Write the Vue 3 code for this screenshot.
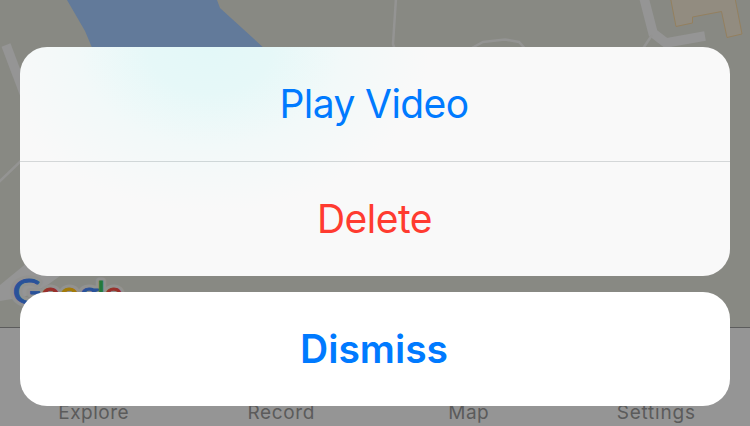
<script setup>
const tabs = ['Explore', 'Record', 'Map', 'Settings']
const actions = [
  { label: 'Play Video', kind: 'play' },
  { label: 'Delete', kind: 'delete' },
]
const letters = [
  { c: 'G', x: 12.5, y: 303.5, w: 29, size: 35.5, color: '#29529a' },
  { c: 'o', x: 41, y: 305, w: 19, size: 33, color: '#99302a' },
  { c: 'o', x: 60, y: 305, w: 19, size: 33, color: '#a47b08' },
  { c: 'g', x: 80, y: 305, w: 19, size: 33, color: '#29529a' },
  { c: 'l', x: 97, y: 304.5, w: 8, size: 33, color: '#237a3b' },
  { c: 'e', x: 104.5, y: 305, w: 18, size: 33, color: '#99302a' },
]
</script>

<template>
  <div class="screen">
    <svg class="map" width="750" height="327" viewBox="0 0 750 327">
      <path class="water" d="M67 0 L85 31 L93 50 L266 50 L220 8 L217 0 Z" />
      <path class="road thick" d="M6 45 L26 98" />
      <path class="road path" d="M-2 183 L24 158" />
      <path class="area" d="M0 285 L28 262 L60 276 L46 286 L24 297 L0 301 Z" />
      <path class="road path" d="M396 -2 L393 44 L395 50" />
      <path class="road path" d="M470 49 L483 42 L505 39.5 L519 42 L530 54" />
      <path class="road thick" d="M644 -2 L653 33 L666 43 L705 36" />
      <path class="road path" d="M652 35 L640 53" />
      <path class="building" d="M670.5 -2 L676 26.5 L692.5 23 V17 L721.5 11.500 L727 37.500 L742 34 L735 -2 Z" />
      <g class="logo">
        <text v-for="l in letters" :key="'h' + l.x" class="halo" :x="l.x" :y="l.y" :font-size="l.size" :textLength="l.w" lengthAdjust="spacingAndGlyphs">{{ l.c }}</text>
        <text v-for="l in letters" :key="l.x" :x="l.x" :y="l.y" :font-size="l.size" :fill="l.color" :stroke="l.color" stroke-width="0.900" :textLength="l.w" lengthAdjust="spacingAndGlyphs">{{ l.c }}</text>
      </g>
    </svg>
    <nav class="tabs">
      <span v-for="t in tabs" :key="t" class="tab" :class="t.toLowerCase()">{{ t }}</span>
    </nav>
    <div class="sheet">
      <div class="card actions">
        <button v-for="a in actions" :key="a.kind" class="action" :class="a.kind"><span>{{ a.label }}</span></button>
      </div>
      <div class="card">
        <button class="action dismiss"><span>Dismiss</span></button>
      </div>
    </div>
  </div>
</template>

<style>
body { margin: 0; overflow: hidden; }
</style>

<style scoped>
.screen {
  position: relative;
  width: 750px;
  height: 426px;
  overflow: hidden;
  background: #888983;
  font-family: Inter, "Liberation Sans", sans-serif;
}
.map { display: block; }
.water { fill: #627a9a; }
.road { fill: none; stroke: #959595; }
.thick { stroke-width: 9.5; }
.path { stroke: #949493; stroke-width: 2.5; }
.area { fill: #959595; }
.building { fill: #928c80; stroke: #94805f; stroke-width: 1; }
.logo { font-family: Lato, sans-serif; }
.halo { fill: #929290; stroke: #929290; stroke-width: 7; stroke-linejoin: round; }
.tabs {
  box-sizing: border-box;
  height: 99px;
  display: grid;
  grid-template-columns: repeat(4, 1fr);
  align-items: end;
  padding-bottom: 1px;
  background: #959595;
  border-top: 1px solid #5c5c5c;
}
.tab {
  font-size: 19px;
  line-height: 24px;
  letter-spacing: 0.5px;
  text-align: center;
  color: #5b5b5b;
}
.record { letter-spacing: 0.65px; }
.settings { letter-spacing: 0.8px; }
.sheet {
  position: absolute;
  inset: 47px 20px 20px;
  display: flex;
  flex-direction: column;
  gap: 16px;
}
.card {
  overflow: hidden;
  border-radius: 27px;
  background: #fff;
}
.actions {
  background:
    radial-gradient(ellipse 220px 165px at 190px 0, #e3f8f8 0%, #e6f8f8 28%, rgba(239, 249, 249, 0.7) 60%, rgba(248, 249, 249, 0) 100%),
    #f9f9f9;
}
.action {
  box-sizing: border-box;
  display: flex;
  align-items: center;
  justify-content: center;
  width: 100%;
  height: 114px;
  padding: 0 2px 0 0;
  border: 0;
  background: transparent;
  font: 400 39px/48px Inter, "Liberation Sans", sans-serif;
  letter-spacing: -0.6px;
  color: #007aff;
}
.action + .action {
  height: 115px;
  padding-right: 1px;
  border-top: 1px solid rgba(0, 20, 30, 0.15);
  letter-spacing: -0.5px;
}
.delete { color: #ff3b30; }
.dismiss {
  font-weight: 600;
  letter-spacing: 0;
}
</style>
